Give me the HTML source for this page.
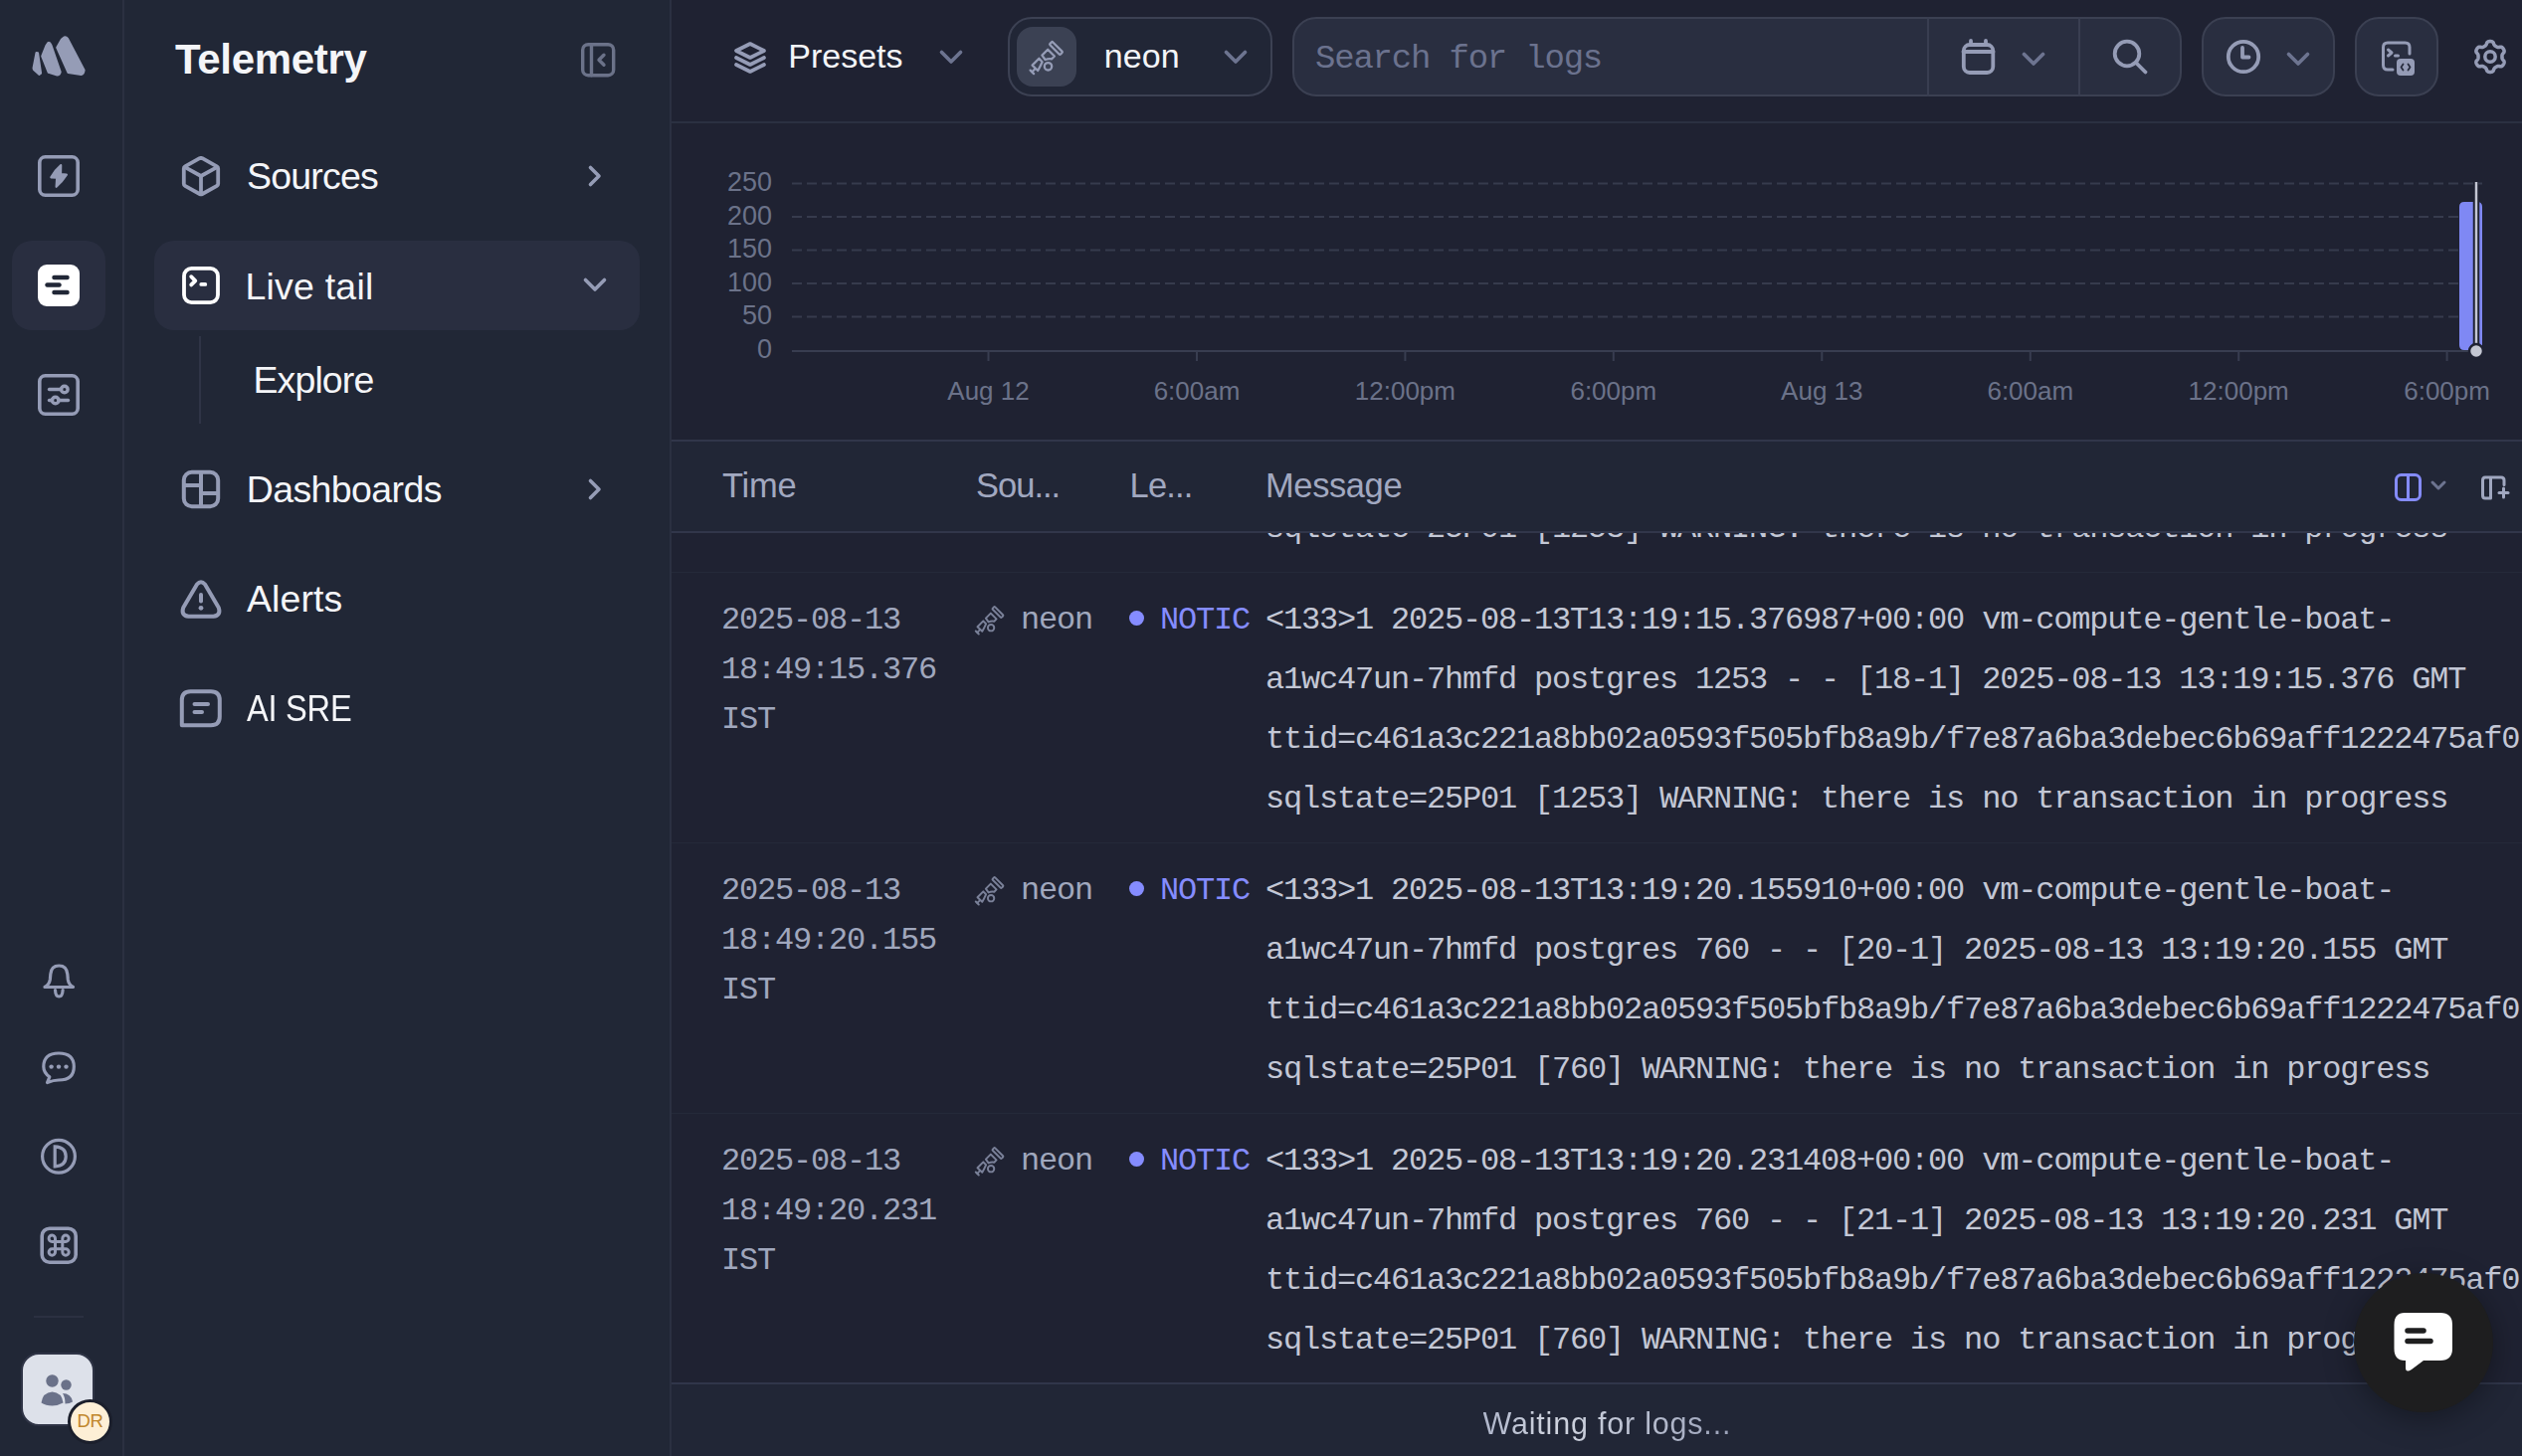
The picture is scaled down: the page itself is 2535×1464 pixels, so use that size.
<!DOCTYPE html>
<html><head><meta charset="utf-8">
<style>
*{margin:0;padding:0;box-sizing:border-box}
html,body{width:2535px;height:1464px;overflow:hidden;background:#1f2232;font-family:"Liberation Sans",sans-serif}
.a{position:absolute}
.t{position:absolute;white-space:pre;line-height:1}
.m{font-family:"Liberation Mono",monospace}
svg{position:absolute;overflow:visible}
@media (max-width:1400px){html{zoom:0.5}}
</style></head><body>
<div class="a" style="left:0px;top:0px;width:123px;height:1464px;background:#212736;"></div>
<div class="a" style="left:123px;top:0px;width:2px;height:1464px;background:#2b3041;"></div>
<div class="a" style="left:125px;top:0px;width:548px;height:1464px;background:#212736;"></div>
<div class="a" style="left:673px;top:0px;width:2px;height:1464px;background:#2b3041;"></div>
<div class="a" style="left:675px;top:122px;width:1860px;height:2px;background:#2b3041;"></div>
<div class="a" style="left:675px;top:442px;width:1860px;height:2px;background:#31364a;"></div>
<div class="a" style="left:675px;top:444px;width:1860px;height:90px;background:#212636;"></div>
<div class="a" style="left:675px;top:534px;width:1860px;height:2px;background:#31364a;"></div>
<div class="a" style="left:675px;top:575px;width:1860px;height:1px;background:#242939;"></div>
<div class="a" style="left:675px;top:847px;width:1860px;height:1px;background:#242939;"></div>
<div class="a" style="left:675px;top:1119px;width:1860px;height:1px;background:#242939;"></div>
<div class="a" style="left:675px;top:1390px;width:1860px;height:2px;background:#30364a;"></div>
<div class="a" style="left:675px;top:1392px;width:1860px;height:72px;background:#212636;"></div>
<svg style="left:0px;top:0px;" width="123" height="123" viewBox="0 0 123 123">
<g fill="#959cb6" stroke="#959cb6" stroke-width="2.2" stroke-linejoin="round">
<path d="M36.6 53 L38 53.4 L41 73.6 L39.3 74.8 L34 70 L33.6 68.5 Z"/>
<path d="M48.6 43 Q50 42.5 51.4 45.5 L60.6 72.4 Q60 75.5 57.5 75.5 L48.8 72.8 L42.3 56.5 L46.5 46 Z"/>
<path d="M64.5 37.5 Q66.5 37 68 39 L84.5 70.5 Q84 74.5 81.5 74.8 L68.5 72.8 L57.3 47.7 L62 39.5 Z"/>
</g>
</svg>
<svg style="left:38px;top:156px;" width="42" height="42" viewBox="0 0 42 42"><rect x="1.8" y="1.8" width="38.4" height="38.4" rx="5.8" fill="none" stroke="#959cb6" stroke-width="3.6"/>
<path fill="#959cb6" d="M23.2 10.2 Q17 15.5 13.3 22.3 L19.2 22.6 L18.6 31.8 Q24.5 26.5 28.9 19.6 L23 19.2 Z" stroke="#959cb6" stroke-width="2.2" stroke-linejoin="round"/></svg>
<div class="a" style="left:12px;top:242px;width:94px;height:90px;background:#292e40;border-radius:20px;"></div>
<svg style="left:38px;top:266px;" width="42" height="42" viewBox="0 0 42 42"><rect x="0" y="0" width="42" height="42" rx="9" fill="#ffffff"/>
<g stroke="#212736" stroke-width="4.5" stroke-linecap="round"><line x1="16.5" y1="13" x2="29.5" y2="13"/><line x1="9.5" y1="20.5" x2="21.5" y2="20.5"/><line x1="16.5" y1="28" x2="29.5" y2="28"/></g></svg>
<svg style="left:38px;top:376px;" width="42" height="42" viewBox="0 0 42 42"><rect x="1.8" y="1.8" width="38.4" height="38.4" rx="5.8" fill="none" stroke="#959cb6" stroke-width="3.6"/>
<g stroke="#959cb6" stroke-width="3.4" stroke-linecap="round" fill="none"><line x1="11.5" y1="15.5" x2="23.5" y2="15.5"/><circle cx="26.8" cy="15.5" r="3.3"/><line x1="21" y1="26.5" x2="30.5" y2="26.5"/><line x1="11.5" y1="26.5" x2="14.4" y2="26.5"/><circle cx="17.7" cy="26.5" r="3.3"/></g></svg>
<svg style="left:40px;top:966px;" width="40" height="40" viewBox="0 0 40 40"><g fill="none" stroke="#959cb6" stroke-width="3.2" stroke-linejoin="round" stroke-linecap="round">
<path d="M5 26.5 Q9.5 24 10.3 19 L10.8 13.5 Q11.5 5 19.3 5 Q27 5 27.8 13.5 L28.3 19 Q29 24 33.5 26.5 Z"/><path d="M15.5 29.5 Q15.8 36 19.3 36 Q22.8 36 23.1 29.5"/></g></svg>
<svg style="left:40px;top:1054px;" width="40" height="40" viewBox="0 0 40 40"><g fill="none" stroke="#959cb6" stroke-width="3.2" stroke-linejoin="round">
<path d="M7.5 34.5 L9.8 28.8 Q3.8 24.5 3.8 18.5 Q3.8 5 19 5 Q34.3 5 34.3 18.5 Q34.3 32 19 32 Q14 32 7.5 34.5 Z"/></g>
<g fill="#959cb6"><circle cx="11.6" cy="18.6" r="2.2"/><circle cx="19" cy="18.6" r="2.2"/><circle cx="26.5" cy="18.6" r="2.2"/></g></svg>
<svg style="left:40px;top:1144px;" width="40" height="40" viewBox="0 0 40 40"><g fill="none" stroke="#959cb6" stroke-width="3.2"><circle cx="19" cy="18.8" r="16.4"/><path d="M15.2 8.8 L15.2 28.8 Q26.2 28.3 26.2 18.8 Q26.2 9.3 15.2 8.8 Z"/></g></svg>
<svg style="left:40px;top:1233px;" width="40" height="40" viewBox="0 0 40 40"><rect x="2.2" y="2.2" width="34" height="34" rx="7.5" fill="none" stroke="#959cb6" stroke-width="3.6"/>
<path fill="none" stroke="#959cb6" stroke-width="3" d="M15.5 15.5 L15.5 12.5 A3.2 3.2 0 1 0 12.3 15.5 L26 15.5 A3.2 3.2 0 1 0 22.8 12.3 L22.8 26 A3.2 3.2 0 1 0 26 22.8 L12.3 22.8 A3.2 3.2 0 1 0 15.5 26 Z"/></svg>
<div class="a" style="left:34px;top:1323px;width:50px;height:2px;background:#2b3041;"></div>
<div class="a" style="left:21px;top:1360px;width:74px;height:74px;background:#dde1ea;border-radius:18px;border:2px solid #2f3446;"></div>
<svg style="left:40px;top:1381.5px;" width="36" height="34" viewBox="0 0 36 34"><g fill="#6a7189"><circle cx="12.5" cy="6.5" r="6.2"/><circle cx="26.5" cy="10.5" r="5.2"/><path d="M1.5 28.5 Q3 18 12.5 17.5 Q22 18 23.5 28.5 Q18 31.5 12.5 31.5 Q6 31.5 1.5 28.5 Z"/><path d="M23 19 Q31.5 19 33 27.5 Q30 29.5 25.5 29.5 Q25.5 23 23 19 Z"/></g></svg>
<div class="a" style="left:68px;top:1407px;width:45px;height:45px;border-radius:50%;background:#fdefd6;border:3px solid #1b1f2c;"></div>
<div class="t" style="left:77.5px;top:1420.34px;font-size:18.5px;color:#c0862a;letter-spacing:-0.3px;">DR</div>
<div class="t" style="left:176px;top:39.44px;font-size:42px;color:#f4f5f8;font-weight:bold;letter-spacing:-0.3px;">Telemetry</div>
<svg style="left:581px;top:40px;" width="40" height="40" viewBox="0 0 40 40"><g fill="none" stroke="#6b7289" stroke-width="3.4" stroke-linejoin="round" stroke-linecap="round"><rect x="4.7" y="4.7" width="31" height="31" rx="5.5"/><line x1="13.5" y1="4.7" x2="13.5" y2="35.7"/><path d="M26 15.2 L21 20.2 L26 25.2"/></g></svg>
<svg style="left:181px;top:155px;" width="42" height="44" viewBox="0 0 42 44"><g fill="none" stroke="#959cb6" stroke-width="3.8" stroke-linejoin="round"><path d="M21 4 Q21.6 3.7 22.4 4.1 L37 12.3 Q38.2 13 38.2 14.5 L38.2 29.8 Q38.2 31.2 37 31.9 L22.4 40 Q21 40.7 19.6 40 L5 31.9 Q3.8 31.2 3.8 29.8 L3.8 14.5 Q3.8 13 5 12.3 L19.6 4.1 Q20.4 3.7 21 4 Z"/><path d="M4.5 12.8 L21 22 L37.5 12.8"/><line x1="21" y1="22" x2="21" y2="40.5"/></g></svg>
<div class="t" style="left:248px;top:159.25px;font-size:37.5px;color:#f4f5f8;letter-spacing:-0.8px;">Sources</div>
<svg style="left:588px;top:164px;" width="20" height="26" viewBox="0 0 20 26"><path d="M5.5 4.5 L14 13 L5.5 21.5" fill="none" stroke="#959cb6" stroke-width="3.6" stroke-linecap="round" stroke-linejoin="round"/></svg>
<div class="a" style="left:155px;top:242px;width:488px;height:90px;background:#292e40;border-radius:20px;"></div>
<svg style="left:181px;top:266px;" width="42" height="42" viewBox="0 0 42 42"><g fill="none" stroke="#ffffff" stroke-width="3.8" stroke-linejoin="round" stroke-linecap="round"><rect x="4" y="3.9" width="34" height="34.2" rx="7.5"/><path d="M11.2 12.2 L15.3 16.3 L11.2 20.4"/><line x1="21.3" y1="19.9" x2="25.3" y2="19.9"/></g></svg>
<div class="t" style="left:246.5px;top:269.75px;font-size:37.5px;color:#f4f5f8;letter-spacing:0.2px;">Live tail</div>
<svg style="left:584px;top:276px;" width="28" height="20" viewBox="0 0 28 20"><path d="M4.5 5.5 L14 15 L23.5 5.5" fill="none" stroke="#959cb6" stroke-width="3.6" stroke-linecap="round" stroke-linejoin="round"/></svg>
<div class="a" style="left:200px;top:338px;width:2px;height:88px;background:#2f3446;"></div>
<div class="t" style="left:254.5px;top:363.75px;font-size:37.5px;color:#f4f5f8;letter-spacing:-0.9px;">Explore</div>
<svg style="left:181px;top:471px;" width="42" height="42" viewBox="0 0 42 42"><g fill="none" stroke="#959cb6" stroke-width="4" stroke-linejoin="round"><rect x="3.8" y="3.8" width="34.4" height="34.4" rx="8"/><line x1="21" y1="3.8" x2="21" y2="38.2"/><line x1="3.8" y1="17" x2="21" y2="17"/><line x1="21" y1="25" x2="38.2" y2="25"/></g></svg>
<div class="t" style="left:247.7px;top:474.25px;font-size:37.5px;color:#f4f5f8;letter-spacing:-0.6px;">Dashboards</div>
<svg style="left:588px;top:479px;" width="20" height="26" viewBox="0 0 20 26"><path d="M5.5 4.5 L14 13 L5.5 21.5" fill="none" stroke="#959cb6" stroke-width="3.6" stroke-linecap="round" stroke-linejoin="round"/></svg>
<svg style="left:180px;top:582px;" width="44" height="42" viewBox="0 0 44 42"><g fill="none" stroke="#959cb6" stroke-width="4" stroke-linejoin="round" stroke-linecap="round"><path d="M18 5.5 Q22 1 26 5.5 L39.8 29 Q42.3 36.8 34.5 37.8 L9.5 37.8 Q1.7 36.8 4.2 29 Z"/><line x1="22" y1="16" x2="22" y2="22.5"/></g><circle cx="22" cy="29.3" r="2.4" fill="#959cb6"/></svg>
<div class="t" style="left:248px;top:584.25px;font-size:37.5px;color:#f4f5f8;letter-spacing:0.1px;">Alerts</div>
<svg style="left:180px;top:692px;" width="44" height="42" viewBox="0 0 44 42"><g fill="none" stroke="#959cb6" stroke-width="4" stroke-linejoin="round" stroke-linecap="round"><path d="M2.8 37.2 L2.8 12 Q2.8 3.2 11.5 3.2 L32 3.2 Q40.8 3.2 40.8 12 L40.8 28.5 Q40.8 37.2 32 37.2 Z"/><line x1="15.5" y1="16" x2="29" y2="16"/><line x1="15.5" y1="24" x2="23" y2="24"/></g></svg>
<div class="t" style="left:248px;top:694.25px;font-size:37.5px;color:#f4f5f8;letter-spacing:-0.3px;transform:scaleX(0.87);transform-origin:0 0;">AI SRE</div>
<svg style="left:733.4px;top:36.6px;" width="42" height="42" viewBox="0 0 24 24"><g fill="none" stroke="#959cb6" stroke-width="2.1" stroke-linejoin="round" stroke-linecap="round"><path d="M12 4 L4 8 L12 12 L20 8 Z"/><path d="M4 12 L12 16 L20 12"/><path d="M4 16 L12 20 L20 16"/></g></svg>
<div class="t" style="left:792.3px;top:39.21px;font-size:34px;color:#f4f5f8;">Presets</div>
<svg style="left:942px;top:47px;" width="28" height="20" viewBox="0 0 28 20"><path d="M4.5 5.5 L14 15 L23.5 5.5" fill="none" stroke="#6d7490" stroke-width="3.7" stroke-linecap="round" stroke-linejoin="round"/></svg>
<div class="a" style="left:1013px;top:17px;width:266px;height:80px;border:2px solid #3c4153;border-radius:24px;background:#212636;"></div>
<div class="a" style="left:1022px;top:27px;width:60px;height:60px;background:#3b4153;border-radius:16px;"></div>
<svg style="left:1030px;top:35px;" width="45" height="45" viewBox="0 0 45 45"><g fill="none" stroke="#959cb6" stroke-width="2.3" stroke-linejoin="round" stroke-linecap="round">
<rect x="24" y="11.45" width="15" height="4" rx="1" transform="rotate(45 31.5 13.45)"/>
<path d="M17.4 20.6 L23.2 14.8 L29.9 21.5 L27.2 24.3 Q24.2 23.6 20.6 25 Z"/>
<path d="M7.6 30.6 L14.4 23.8 L17.6 27.2 Q15.5 32 13.2 36 Z"/>
<line x1="5.6" y1="35.6" x2="9.1" y2="39.1"/>
<line x1="7.4" y1="37.3" x2="10.4" y2="34.3"/>
<circle cx="23.5" cy="31.8" r="3.7"/></g></svg>
<div class="t" style="left:1109.8px;top:38.51px;font-size:34px;color:#f4f5f8;letter-spacing:0.1px;">neon</div>
<svg style="left:1228px;top:47px;" width="28" height="20" viewBox="0 0 28 20"><path d="M4.5 5.5 L14 15 L23.5 5.5" fill="none" stroke="#6d7490" stroke-width="3.7" stroke-linecap="round" stroke-linejoin="round"/></svg>
<div class="a" style="left:1299px;top:17px;width:894px;height:80px;border:2px solid #3b4052;border-radius:24px;background:#292e40;"></div>
<div class="t m" style="left:1322px;top:42.25px;font-size:34px;color:#6b728e;letter-spacing:-1.2px;">Search for logs</div>
<div class="a" style="left:1937px;top:17px;width:2px;height:80px;background:#393e51;"></div>
<svg style="left:1970px;top:38px;" width="38" height="38" viewBox="0 0 38 38"><g fill="none" stroke="#959cb6" stroke-width="3.8" stroke-linejoin="round" stroke-linecap="round"><rect x="3.8" y="7" width="29.5" height="28" rx="6"/><line x1="3.5" y1="14" x2="33.5" y2="14"/><line x1="11" y1="3" x2="11" y2="7"/><line x1="26" y1="3" x2="26" y2="7"/></g></svg>
<svg style="left:2030px;top:49px;" width="28" height="20" viewBox="0 0 28 20"><path d="M4.5 5.5 L14 15 L23.5 5.5" fill="none" stroke="#6d7490" stroke-width="3.7" stroke-linecap="round" stroke-linejoin="round"/></svg>
<div class="a" style="left:2089px;top:17px;width:2px;height:80px;background:#393e51;"></div>
<svg style="left:2122px;top:38px;" width="38" height="38" viewBox="0 0 38 38"><g fill="none" stroke="#959cb6" stroke-width="3.8" stroke-linecap="round"><circle cx="16" cy="16" r="12.3"/><line x1="25" y1="25" x2="34.5" y2="34.5"/></g></svg>
<div class="a" style="left:2213px;top:17px;width:134px;height:80px;border:2px solid #3b4052;border-radius:24px;background:#292e40;"></div>
<svg style="left:2236px;top:38px;" width="38" height="38" viewBox="0 0 38 38"><g fill="none" stroke="#959cb6" stroke-width="3.8" stroke-linecap="round" stroke-linejoin="round"><circle cx="19" cy="19" r="15.2"/><path d="M18 10 L18 19.5 L24.5 19.5"/></g></svg>
<svg style="left:2296px;top:49px;" width="28" height="20" viewBox="0 0 28 20"><path d="M4.5 5.5 L14 15 L23.5 5.5" fill="none" stroke="#6d7490" stroke-width="3.7" stroke-linecap="round" stroke-linejoin="round"/></svg>
<div class="a" style="left:2367px;top:17px;width:84px;height:80px;border:2px solid #3b4052;border-radius:24px;background:#292e40;"></div>
<svg style="left:2393px;top:40px;" width="36" height="38" viewBox="0 0 36 38"><g fill="none" stroke="#959cb6" stroke-width="3" stroke-linejoin="round" stroke-linecap="round"><path d="M12 30 L7 30 Q2.5 30 2.5 25.5 L2.5 7.5 Q2.5 3 7 3 L24.5 3 Q29 3 29 7.5 L29 14"/><path d="M7.5 10 L11 13 L7.5 16"/><line x1="14.5" y1="16" x2="17.5" y2="16"/></g>
<rect x="16" y="19" width="18" height="17" rx="4" fill="#959cb6"/>
<g fill="none" stroke="#282d3e" stroke-width="1.8" stroke-linecap="round" stroke-linejoin="round"><path d="M22.5 24.5 L20.5 27.5 L22.5 30.5"/><path d="M27.5 24.5 L29.5 27.5 L27.5 30.5"/></g></svg>
<svg style="left:2482px;top:36px;" width="42" height="42" viewBox="0 0 42 42"><g fill="none" stroke="#959cb6" stroke-width="3.5" stroke-linejoin="round"><path d="M32.95 21.00 L32.95 21.31 L32.95 21.63 L32.96 21.94 L32.98 22.26 L33.02 22.58 L33.10 22.92 L33.25 23.27 L33.49 23.65 L33.83 24.08 L34.23 24.55 L34.62 25.04 L34.92 25.52 L35.09 25.99 L35.14 26.43 L35.12 26.85 L35.03 27.25 L34.90 27.63 L34.75 28.01 L34.57 28.37 L34.38 28.72 L34.17 29.07 L33.94 29.40 L33.70 29.73 L33.42 30.03 L33.12 30.30 L32.77 30.53 L32.36 30.71 L31.87 30.79 L31.31 30.78 L30.69 30.69 L30.08 30.57 L29.54 30.49 L29.09 30.47 L28.71 30.52 L28.38 30.62 L28.08 30.74 L27.79 30.89 L27.52 31.04 L27.25 31.19 L26.98 31.35 L26.70 31.51 L26.43 31.66 L26.16 31.83 L25.90 32.00 L25.64 32.20 L25.39 32.44 L25.16 32.74 L24.94 33.14 L24.75 33.65 L24.55 34.23 L24.32 34.81 L24.04 35.31 L23.72 35.69 L23.37 35.96 L22.99 36.15 L22.61 36.27 L22.21 36.36 L21.81 36.41 L21.40 36.44 L21.00 36.45 L20.60 36.44 L20.19 36.41 L19.79 36.36 L19.39 36.27 L19.01 36.15 L18.63 35.96 L18.28 35.69 L17.96 35.31 L17.68 34.81 L17.45 34.23 L17.25 33.65 L17.06 33.14 L16.84 32.74 L16.61 32.44 L16.36 32.20 L16.10 32.00 L15.84 31.83 L15.57 31.66 L15.30 31.51 L15.03 31.35 L14.75 31.19 L14.48 31.04 L14.21 30.89 L13.92 30.74 L13.62 30.62 L13.29 30.52 L12.91 30.47 L12.46 30.49 L11.92 30.57 L11.31 30.69 L10.69 30.78 L10.13 30.79 L9.64 30.71 L9.23 30.53 L8.88 30.30 L8.58 30.03 L8.30 29.73 L8.06 29.40 L7.83 29.07 L7.62 28.72 L7.43 28.37 L7.25 28.01 L7.10 27.63 L6.97 27.25 L6.88 26.85 L6.86 26.43 L6.91 25.99 L7.08 25.52 L7.38 25.04 L7.77 24.55 L8.17 24.08 L8.51 23.65 L8.75 23.27 L8.90 22.92 L8.98 22.58 L9.02 22.26 L9.04 21.94 L9.05 21.63 L9.05 21.31 L9.05 21.00 L9.05 20.69 L9.05 20.37 L9.04 20.06 L9.02 19.74 L8.98 19.42 L8.90 19.08 L8.75 18.73 L8.51 18.35 L8.17 17.92 L7.77 17.45 L7.38 16.96 L7.08 16.48 L6.91 16.01 L6.86 15.57 L6.88 15.15 L6.97 14.75 L7.10 14.37 L7.25 13.99 L7.43 13.63 L7.62 13.28 L7.83 12.93 L8.06 12.60 L8.30 12.27 L8.58 11.97 L8.88 11.70 L9.23 11.47 L9.64 11.29 L10.13 11.21 L10.69 11.22 L11.31 11.31 L11.92 11.43 L12.46 11.51 L12.91 11.53 L13.29 11.48 L13.62 11.38 L13.92 11.26 L14.21 11.11 L14.48 10.96 L14.75 10.81 L15.02 10.65 L15.30 10.49 L15.57 10.34 L15.84 10.17 L16.10 10.00 L16.36 9.80 L16.61 9.56 L16.84 9.26 L17.06 8.86 L17.25 8.35 L17.45 7.77 L17.68 7.19 L17.96 6.69 L18.28 6.31 L18.63 6.04 L19.01 5.85 L19.39 5.73 L19.79 5.64 L20.19 5.59 L20.60 5.56 L21.00 5.55 L21.40 5.56 L21.81 5.59 L22.21 5.64 L22.61 5.73 L22.99 5.85 L23.37 6.04 L23.72 6.31 L24.04 6.69 L24.32 7.19 L24.55 7.77 L24.75 8.35 L24.94 8.86 L25.16 9.26 L25.39 9.56 L25.64 9.80 L25.90 10.00 L26.16 10.17 L26.43 10.34 L26.70 10.49 L26.98 10.65 L27.25 10.81 L27.52 10.96 L27.79 11.11 L28.08 11.26 L28.38 11.38 L28.71 11.48 L29.09 11.53 L29.54 11.51 L30.08 11.43 L30.69 11.31 L31.31 11.22 L31.87 11.21 L32.36 11.29 L32.77 11.47 L33.12 11.70 L33.42 11.97 L33.70 12.27 L33.94 12.60 L34.17 12.93 L34.38 13.28 L34.57 13.63 L34.75 13.99 L34.90 14.37 L35.03 14.75 L35.12 15.15 L35.14 15.57 L35.09 16.01 L34.92 16.48 L34.62 16.96 L34.23 17.45 L33.83 17.92 L33.49 18.35 L33.25 18.73 L33.10 19.08 L33.02 19.42 L32.98 19.74 L32.96 20.06 L32.95 20.37 L32.95 20.69 Z"/><circle cx="21" cy="21" r="5.2"/></g></svg>
<div class="t" style="right:1759px;top:170.44px;font-size:27px;color:#6b7289;">250</div>
<div class="t" style="right:1759px;top:203.94px;font-size:27px;color:#6b7289;">200</div>
<div class="t" style="right:1759px;top:237.44px;font-size:27px;color:#6b7289;">150</div>
<div class="t" style="right:1759px;top:270.94px;font-size:27px;color:#6b7289;">100</div>
<div class="t" style="right:1759px;top:304.44px;font-size:27px;color:#6b7289;">50</div>
<div class="t" style="right:1759px;top:338.44px;font-size:27px;color:#6b7289;">0</div>
<svg style="left:0px;top:0px;pointer-events:none;" width="2535" height="1464" viewBox="0 0 2535 1464"><g stroke="#363b4d" stroke-width="2" stroke-dasharray="10 5"><line x1="796" y1="184.5" x2="2495" y2="184.5"/><line x1="796" y1="218" x2="2495" y2="218"/><line x1="796" y1="251.5" x2="2495" y2="251.5"/><line x1="796" y1="285" x2="2495" y2="285"/><line x1="796" y1="318.5" x2="2495" y2="318.5"/></g>
<line x1="796" y1="353" x2="2495" y2="353" stroke="#383d50" stroke-width="2"/>
<line x1="993.5" y1="353" x2="993.5" y2="363" stroke="#383d50" stroke-width="2"/><line x1="1203.0" y1="353" x2="1203.0" y2="363" stroke="#383d50" stroke-width="2"/><line x1="1412.4" y1="353" x2="1412.4" y2="363" stroke="#383d50" stroke-width="2"/><line x1="1621.8" y1="353" x2="1621.8" y2="363" stroke="#383d50" stroke-width="2"/><line x1="1831.3" y1="353" x2="1831.3" y2="363" stroke="#383d50" stroke-width="2"/><line x1="2040.8" y1="353" x2="2040.8" y2="363" stroke="#383d50" stroke-width="2"/><line x1="2250.2" y1="353" x2="2250.2" y2="363" stroke="#383d50" stroke-width="2"/><line x1="2459.6" y1="353" x2="2459.6" y2="363" stroke="#383d50" stroke-width="2"/>
<path d="M2472 347 L2472 208 Q2472 203 2477 203 L2490 203 Q2495 203 2495 208 L2495 347 Q2495 352 2490 352 L2477 352 Q2472 352 2472 347 Z" fill="#7f88f4"/>
<line x1="2489" y1="203" x2="2489" y2="352" stroke="#1f2232" stroke-width="6.5"/>
<line x1="2489" y1="183" x2="2489" y2="352" stroke="#c3c6d3" stroke-width="2.5"/>
<circle cx="2489" cy="353" r="7" fill="#c4c7d3" stroke="#1f2232" stroke-width="2.5"/></svg>
<div class="t" style="left:843.5px;width:300px;text-align:center;top:380.49px;font-size:26px;color:#6b7289;">Aug 12</div>
<div class="t" style="left:1053.0px;width:300px;text-align:center;top:380.49px;font-size:26px;color:#6b7289;">6:00am</div>
<div class="t" style="left:1262.4px;width:300px;text-align:center;top:380.49px;font-size:26px;color:#6b7289;">12:00pm</div>
<div class="t" style="left:1471.8px;width:300px;text-align:center;top:380.49px;font-size:26px;color:#6b7289;">6:00pm</div>
<div class="t" style="left:1681.3px;width:300px;text-align:center;top:380.49px;font-size:26px;color:#6b7289;">Aug 13</div>
<div class="t" style="left:1890.8px;width:300px;text-align:center;top:380.49px;font-size:26px;color:#6b7289;">6:00am</div>
<div class="t" style="left:2100.2px;width:300px;text-align:center;top:380.49px;font-size:26px;color:#6b7289;">12:00pm</div>
<div class="t" style="left:2309.6px;width:300px;text-align:center;top:380.49px;font-size:26px;color:#6b7289;">6:00pm</div>
<div class="t" style="left:726px;top:470.79px;font-size:34.5px;color:#a1a8c0;letter-spacing:-0.2px;">Time</div>
<div class="t" style="left:981px;top:470.79px;font-size:34.5px;color:#a1a8c0;letter-spacing:-1.0px;">Sou...</div>
<div class="t" style="left:1135.5px;top:470.79px;font-size:34.5px;color:#a1a8c0;letter-spacing:-0.8px;">Le...</div>
<div class="t" style="left:1272px;top:470.79px;font-size:34.5px;color:#a1a8c0;letter-spacing:-0.4px;">Message</div>
<svg style="left:2405px;top:474px;" width="32" height="32" viewBox="0 0 32 32"><g fill="none" stroke="#858cff" stroke-width="3" stroke-linejoin="round"><rect x="3.5" y="3.5" width="24" height="25" rx="5"/><line x1="15.5" y1="3.5" x2="15.5" y2="28.5"/></g></svg>
<svg style="left:2441px;top:481px;" width="20" height="16" viewBox="0 0 20 16"><path d="M4 4 L10 10 L16 4" fill="none" stroke="#6d7490" stroke-width="3" stroke-linecap="round" stroke-linejoin="round"/></svg>
<svg style="left:2492px;top:476px;" width="32" height="30" viewBox="0 0 32 30"><g fill="none" stroke="#a0a7c0" stroke-width="3" stroke-linejoin="round" stroke-linecap="round"><path d="M25 11.5 L25 7 Q25 4 22 4 L6 4 Q3.5 4 3.5 7 L3.5 22 Q3.5 25 6 25 L11.5 25 L11.5 4"/><line x1="20" y1="19.5" x2="29" y2="19.5"/><line x1="24.5" y1="15" x2="24.5" y2="24"/></g></svg>
<div class="a" style="left:675px;top:536px;width:1860px;height:854px;overflow:hidden;">
<div class="t m" style="left:597px;top:-199.52px;font-size:32px;letter-spacing:-1.2px;color:#c3c7d5;"></div>
<div class="t m" style="left:597px;top:-139.52px;font-size:32px;letter-spacing:-1.2px;color:#c3c7d5;"></div>
<div class="t m" style="left:597px;top:-79.52px;font-size:32px;letter-spacing:-1.2px;color:#c3c7d5;"></div>
<div class="t m" style="left:597px;top:-19.52px;font-size:32px;letter-spacing:-1.2px;color:#c3c7d5;">sqlstate=25P01 [1253] WARNING: there is no transaction in progress</div>
<div class="t m" style="left:50px;top:72.48px;font-size:32px;letter-spacing:-1.2px;color:#a0a7bd;">2025-08-13</div>
<div class="t m" style="left:50px;top:122.48px;font-size:32px;letter-spacing:-1.2px;color:#a0a7bd;">18:49:15.376</div>
<div class="t m" style="left:50px;top:172.48px;font-size:32px;letter-spacing:-1.2px;color:#a0a7bd;">IST</div>
<svg style="left:301px;top:68px" width="38.5" height="38.5" viewBox="0 0 45 45"><g fill="none" stroke="#7a8199" stroke-width="2.3" stroke-linejoin="round" stroke-linecap="round">
<rect x="24" y="11.45" width="15" height="4" rx="1" transform="rotate(45 31.5 13.45)"/>
<path d="M17.4 20.6 L23.2 14.8 L29.9 21.5 L27.2 24.3 Q24.2 23.6 20.6 25 Z"/>
<path d="M7.6 30.6 L14.4 23.8 L17.6 27.2 Q15.5 32 13.2 36 Z"/>
<line x1="5.6" y1="35.6" x2="9.1" y2="39.1"/>
<line x1="7.4" y1="37.3" x2="10.4" y2="34.3"/>
<circle cx="23.5" cy="31.8" r="3.7"/></g></svg>
<div class="t m" style="left:351px;top:72.48px;font-size:32px;letter-spacing:-1.2px;color:#a0a7bd;">neon</div>
<div class="a" style="left:460px;top:78px;width:15px;height:15px;border-radius:50%;background:#858cff;"></div>
<div class="t m" style="left:491px;top:72.48px;font-size:32px;letter-spacing:-1.2px;color:#858cff;">NOTIC</div>
<div class="t m" style="left:597px;top:72.48px;font-size:32px;letter-spacing:-1.2px;color:#c3c7d5;">&lt;133&gt;1 2025-08-13T13:19:15.376987+00:00 vm-compute-gentle-boat-</div>
<div class="t m" style="left:597px;top:132.48px;font-size:32px;letter-spacing:-1.2px;color:#c3c7d5;">a1wc47un-7hmfd postgres 1253 - - [18-1] 2025-08-13 13:19:15.376 GMT</div>
<div class="t m" style="left:597px;top:192.48px;font-size:32px;letter-spacing:-1.2px;color:#c3c7d5;">ttid=c461a3c221a8bb02a0593f505bfb8a9b/f7e87a6ba3debec6b69aff1222475af0</div>
<div class="t m" style="left:597px;top:252.48px;font-size:32px;letter-spacing:-1.2px;color:#c3c7d5;">sqlstate=25P01 [1253] WARNING: there is no transaction in progress</div>
<div class="t m" style="left:50px;top:344.48px;font-size:32px;letter-spacing:-1.2px;color:#a0a7bd;">2025-08-13</div>
<div class="t m" style="left:50px;top:394.48px;font-size:32px;letter-spacing:-1.2px;color:#a0a7bd;">18:49:20.155</div>
<div class="t m" style="left:50px;top:444.48px;font-size:32px;letter-spacing:-1.2px;color:#a0a7bd;">IST</div>
<svg style="left:301px;top:340px" width="38.5" height="38.5" viewBox="0 0 45 45"><g fill="none" stroke="#7a8199" stroke-width="2.3" stroke-linejoin="round" stroke-linecap="round">
<rect x="24" y="11.45" width="15" height="4" rx="1" transform="rotate(45 31.5 13.45)"/>
<path d="M17.4 20.6 L23.2 14.8 L29.9 21.5 L27.2 24.3 Q24.2 23.6 20.6 25 Z"/>
<path d="M7.6 30.6 L14.4 23.8 L17.6 27.2 Q15.5 32 13.2 36 Z"/>
<line x1="5.6" y1="35.6" x2="9.1" y2="39.1"/>
<line x1="7.4" y1="37.3" x2="10.4" y2="34.3"/>
<circle cx="23.5" cy="31.8" r="3.7"/></g></svg>
<div class="t m" style="left:351px;top:344.48px;font-size:32px;letter-spacing:-1.2px;color:#a0a7bd;">neon</div>
<div class="a" style="left:460px;top:350px;width:15px;height:15px;border-radius:50%;background:#858cff;"></div>
<div class="t m" style="left:491px;top:344.48px;font-size:32px;letter-spacing:-1.2px;color:#858cff;">NOTIC</div>
<div class="t m" style="left:597px;top:344.48px;font-size:32px;letter-spacing:-1.2px;color:#c3c7d5;">&lt;133&gt;1 2025-08-13T13:19:20.155910+00:00 vm-compute-gentle-boat-</div>
<div class="t m" style="left:597px;top:404.48px;font-size:32px;letter-spacing:-1.2px;color:#c3c7d5;">a1wc47un-7hmfd postgres 760 - - [20-1] 2025-08-13 13:19:20.155 GMT</div>
<div class="t m" style="left:597px;top:464.48px;font-size:32px;letter-spacing:-1.2px;color:#c3c7d5;">ttid=c461a3c221a8bb02a0593f505bfb8a9b/f7e87a6ba3debec6b69aff1222475af0</div>
<div class="t m" style="left:597px;top:524.48px;font-size:32px;letter-spacing:-1.2px;color:#c3c7d5;">sqlstate=25P01 [760] WARNING: there is no transaction in progress</div>
<div class="t m" style="left:50px;top:616.48px;font-size:32px;letter-spacing:-1.2px;color:#a0a7bd;">2025-08-13</div>
<div class="t m" style="left:50px;top:666.48px;font-size:32px;letter-spacing:-1.2px;color:#a0a7bd;">18:49:20.231</div>
<div class="t m" style="left:50px;top:716.48px;font-size:32px;letter-spacing:-1.2px;color:#a0a7bd;">IST</div>
<svg style="left:301px;top:612px" width="38.5" height="38.5" viewBox="0 0 45 45"><g fill="none" stroke="#7a8199" stroke-width="2.3" stroke-linejoin="round" stroke-linecap="round">
<rect x="24" y="11.45" width="15" height="4" rx="1" transform="rotate(45 31.5 13.45)"/>
<path d="M17.4 20.6 L23.2 14.8 L29.9 21.5 L27.2 24.3 Q24.2 23.6 20.6 25 Z"/>
<path d="M7.6 30.6 L14.4 23.8 L17.6 27.2 Q15.5 32 13.2 36 Z"/>
<line x1="5.6" y1="35.6" x2="9.1" y2="39.1"/>
<line x1="7.4" y1="37.3" x2="10.4" y2="34.3"/>
<circle cx="23.5" cy="31.8" r="3.7"/></g></svg>
<div class="t m" style="left:351px;top:616.48px;font-size:32px;letter-spacing:-1.2px;color:#a0a7bd;">neon</div>
<div class="a" style="left:460px;top:622px;width:15px;height:15px;border-radius:50%;background:#858cff;"></div>
<div class="t m" style="left:491px;top:616.48px;font-size:32px;letter-spacing:-1.2px;color:#858cff;">NOTIC</div>
<div class="t m" style="left:597px;top:616.48px;font-size:32px;letter-spacing:-1.2px;color:#c3c7d5;">&lt;133&gt;1 2025-08-13T13:19:20.231408+00:00 vm-compute-gentle-boat-</div>
<div class="t m" style="left:597px;top:676.48px;font-size:32px;letter-spacing:-1.2px;color:#c3c7d5;">a1wc47un-7hmfd postgres 760 - - [21-1] 2025-08-13 13:19:20.231 GMT</div>
<div class="t m" style="left:597px;top:736.48px;font-size:32px;letter-spacing:-1.2px;color:#c3c7d5;">ttid=c461a3c221a8bb02a0593f505bfb8a9b/f7e87a6ba3debec6b69aff1222475af0</div>
<div class="t m" style="left:597px;top:796.48px;font-size:32px;letter-spacing:-1.2px;color:#c3c7d5;">sqlstate=25P01 [760] WARNING: there is no transaction in progress</div>
</div>
<div class="t" style="left:1490.5px;top:1416.48px;font-size:30.5px;color:transparent;letter-spacing:0.8px;background:linear-gradient(90deg,#aeb5ca 0%,#d0d4df 28%,#bcc2d3 60%,#9aa1b8 100%);-webkit-background-clip:text;background-clip:text;padding-bottom:12px;">Waiting for logs...</div>
<div class="a" style="left:2366px;top:1280px;width:140px;height:140px;border-radius:50%;background:#1e1e1f;box-shadow:0 6px 30px rgba(0,0,0,0.35);"></div>
<svg style="left:2405px;top:1318px;" width="62" height="64" viewBox="0 0 62 64"><path fill="#ffffff" d="M12 2 L48 2 Q60 2 60 14 L60 38 Q60 50 48 50 L31 50 L19 59 Q13 63 13 57 L13 50 L12 50 Q1.5 50 1.5 38 L1.5 14 Q1.5 2 12 2 Z"/>
<g stroke="#1e1e1f" stroke-width="5.5" stroke-linecap="round"><line x1="15" y1="20" x2="31" y2="20"/><line x1="15" y1="30.5" x2="38" y2="30.5"/></g></svg>
</body></html>
